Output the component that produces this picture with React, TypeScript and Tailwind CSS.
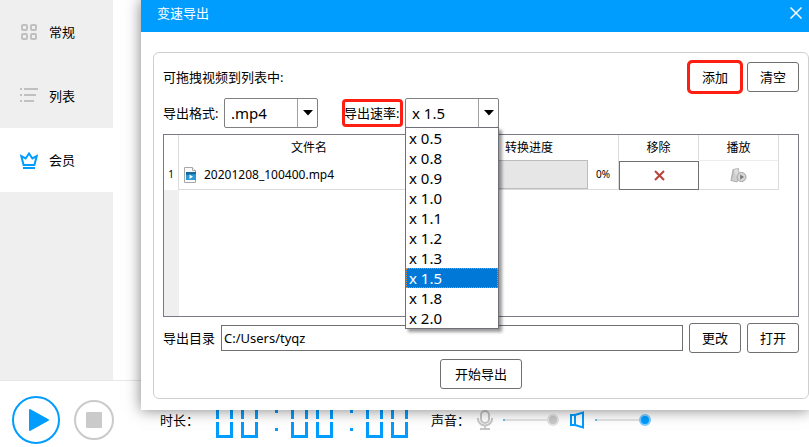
import { FC, ReactNode, useState } from 'react';

const rates = ['0.5', '0.8', '0.9', '1.0', '1.1', '1.2', '1.3', '1.5', '1.8', '2.0'];

const GridIcon: FC = () => (
  <svg width="18" height="18" viewBox="0 0 18 18" fill="none" stroke="#c0c0c0" strokeWidth="2">
    <rect x="2" y="2" width="5" height="5" rx="1" />
    <rect x="11" y="2" width="5" height="5" rx="1" />
    <rect x="2" y="11" width="5" height="5" rx="1" />
    <rect x="11" y="11" width="5" height="5" rx="1" />
  </svg>
);

const ListIcon: FC = () => (
  <svg width="18" height="18" viewBox="0 0 18 18" fill="#c0c0c0">
    <path d="M0 1h2v2H0zM4 1h14v2H4zM0 7h2v2H0zM4 7h12v2H4zM0 13h2v2H0zM4 13h10v2H4z" />
  </svg>
);

const CrownIcon: FC = () => (
  <svg width="18" height="18" viewBox="0 0 18 18" fill="none" stroke="#009dff" strokeWidth="2">
    <path d="M1.3 5.2 5.6 7.500 9 2.5l3.400 5 4.300-2.300L14.4 14H3.6z" />
    <path d="M3 17h12" />
  </svg>
);

const FileIcon: FC = () => (
  <svg width="13" height="16" viewBox="0 0 13 16">
    <path d="M.5.5h8l3 3v12H.5z" fill="#fafafa" stroke="#a8a8a8" />
    <path d="M8.5.5v3h3" fill="#fff" stroke="#a8a8a8" />
    <path d="M2 5h10v8H2z" fill="#2a9ad6" />
    <path d="M2 5h10v2l-10 1z" fill="#146a9e" />
    <path d="M5.500 7.500v4.500l3.500-2.200z" fill="#fff" />
  </svg>
);

const RemoveIcon: FC = () => (
  <svg width="11" height="11" viewBox="0 0 11 11" fill="none" stroke="#b8433a" strokeWidth="2">
    <path d="M1 1l9 9M10 1 1 10" />
  </svg>
);

const PlayFileIcon: FC = () => (
  <svg width="17" height="15" viewBox="0 0 17 15">
    <path d="M3 1.5 8.500.5 9.500 11 1 12.500z" fill="#dedede" stroke="#b5b5b5" />
    <path d="M3.500 2 2.500 8 1 12.500l6 1.500 1-2" fill="#cfcfcf" stroke="#b0b0b0" />
    <circle cx="11.5" cy="9" r="4.5" fill="#d6d6d6" stroke="#a2a2a2" />
    <path d="M10.200 6.5v5l3.800-2.500z" fill="#777" />
  </svg>
);

const MicIcon: FC = () => (
  <svg width="16" height="20" viewBox="0 0 16 20" fill="none" stroke="#c6c6c6" strokeWidth="2">
    <rect x="4" y="1" width="8" height="12" rx="4" />
    <path d="M1 8v1a7 6.5 0 0 0 14 0V8M8 15.500v3.500M3 19h10" />
  </svg>
);

const SpeakerIcon: FC = () => (
  <svg width="14" height="18" viewBox="0 0 14 18" fill="none" stroke="#009dff" strokeWidth="2">
    <path d="M1 4h4v10H1zM5 4l8-2.500v15L5 14" />
  </svg>
);

interface NavItemProps {
  icon: ReactNode;
  label: string;
  active?: boolean;
}

const NavItem: FC<NavItemProps> = ({ icon, label, active }) => (
  <a href="#" className={`flex h-16 items-center gap-[11px] pl-5 ${active ? 'bg-white' : ''}`}>
    {icon}
    {label}
  </a>
);

const SideBar: FC = () => (
  <nav className="w-[113px] shrink-0 bg-[#efefef]">
    <NavItem icon={<GridIcon />} label="常规" />
    <NavItem icon={<ListIcon />} label="列表" />
    <NavItem icon={<CrownIcon />} label="会员" active />
  </nav>
);

interface ButtonProps {
  children: ReactNode;
  className?: string;
}

const Button: FC<ButtonProps> = ({ children, className = 'w-[52px]' }) => (
  <button type="button" className={`h-[30px] shrink-0 rounded-[3px] border border-[#707070] bg-white ${className}`}>
    {children}
  </button>
);

interface SelectProps {
  id: string;
  value: string;
  options: string[];
  onChange?: (value: string) => void;
  children?: ReactNode;
}

const Select: FC<SelectProps> = ({ id, value, options, onChange, children }) => (
  <div className="relative w-[94px]">
    <select
      id={id}
      value={value}
      onChange={(e) => onChange?.(e.target.value)}
      className="block h-[30px] w-full appearance-none rounded-[2px] border border-[#808080] bg-white pl-1.5 text-[15px]"
    >
      {options.map((option) => (
        <option key={option}>{option}</option>
      ))}
    </select>
    <span className="pointer-events-none absolute inset-y-px right-px flex w-5 items-center justify-center border-l border-[#a0a0a0]">
      <svg width="10" height="6" viewBox="0 0 10 6">
        <path d="M0 0h10L5 5.500z" />
      </svg>
    </span>
    {children}
  </div>
);

const FileTable: FC = () => (
  <div className="h-[183px] border border-[#7a7a85]">
    <table className="h-full w-full table-fixed border-separate border-spacing-0 text-xs">
      <colgroup>
        <col className="w-[15px]" />
        <col />
        <col className="w-[179px]" />
        <col className="w-20" />
        <col className="w-20" />
        <col className="w-[19px]" />
      </colgroup>
      <thead>
        <tr className="h-[25px]">
          <td className="border-r border-[#dcdcdc]" />
          <th className="border-r border-[#dcdcdc] font-normal">文件名</th>
          <th className="border-r border-[#dcdcdc] font-normal">转换进度</th>
          <th className="border-r border-[#dcdcdc] font-normal">移除</th>
          <th className="border-r border-[#dcdcdc] font-normal">播放</th>
          <td />
        </tr>
      </thead>
      <tbody>
        <tr className="h-[30px]">
          <th className="border-r border-[#dcdcdc] p-0 text-[10px] font-normal">1</th>
          <td className="border-b border-[#dcdcdc] p-0">
            <div className="flex items-center gap-[7px] pl-[5px]">
              <FileIcon />
              20201208_100400.mp4
            </div>
          </td>
          <td className="border-r border-b border-[#dcdcdc] p-0">
            <div className="flex h-[29px] items-center gap-2">
              <div role="progressbar" aria-valuenow={0} className="h-full w-[148px] border border-[#bcbcbc] bg-[#e6e6e6]" />
              <span className="text-[10px]">0%</span>
            </div>
          </td>
          <td className="p-0">
            <button type="button" aria-label="移除" className="flex h-[29px] w-full items-center justify-center border border-[#707070]">
              <RemoveIcon />
            </button>
          </td>
          <td className="border-r border-b border-[#dcdcdc] p-0">
            <button type="button" aria-label="播放" className="flex h-[29px] w-full items-center justify-center border-t border-[#ececec]">
              <PlayFileIcon />
            </button>
          </td>
          <td />
        </tr>
        <tr>
          <td className="bg-[#efefef]" />
          <td colSpan={5} />
        </tr>
      </tbody>
    </table>
  </div>
);

const ExportDialog: FC = () => {
  const [rate, setRate] = useState('x 1.5');

  return (
    <section className="absolute top-0 right-0 left-[141px] bg-white shadow-[0_0_14px_rgba(0,0,0,0.5)]">
      <header className="flex h-8 items-center justify-between bg-[#009dff] pr-[7px] pb-1.5 pl-4 text-white">
        <h1>变速导出</h1>
        <button type="button" aria-label="关闭">
          <svg width="12" height="12" viewBox="0 0 12 12" stroke="#fff" strokeWidth="1.500">
            <path d="M.5.500l11 11M11.500.500l-11 11" />
          </svg>
        </button>
      </header>

      <div className="pt-5 pb-[11px] pl-3">
        <div className="flex flex-col gap-1.5 rounded-md border border-[#cfcfcf] p-[9px]">
          <div className="flex items-center gap-1.5">
            <p className="flex-1">可拖拽视频到列表中:</p>
            <Button className="w-[52px] outline-3 -outline-offset-1 outline-[#ff1f12]">添加</Button>
            <Button>清空</Button>
          </div>

          <div className="flex h-[30px] items-center whitespace-nowrap">
            <label htmlFor="format" className="mr-1.5 w-[55px]">
              导出格式:
            </label>
            <Select id="format" value=".mp4" options={['.mp4']} />
            <label
              htmlFor="rate"
              className="mr-1 ml-[26px] w-[57px] rounded-xs py-0.5 outline-3 -outline-offset-1 outline-[#ff1f12]"
            >
              导出速率:
            </label>
            <Select id="rate" value={rate} options={rates.map((r) => `x ${r}`)} onChange={setRate}>
              <ul
                role="listbox"
                aria-label="导出速率"
                className="absolute top-[29px] left-0 z-10 w-full border border-[#707078] bg-white text-[15px] leading-5 shadow-[3px_3px_3px_rgba(0,0,0,0.4)]"
              >
                {rates.map((r) => {
                  const option = `x ${r}`;
                  const selected = option === rate;
                  return (
                    <li
                      key={r}
                      role="option"
                      aria-selected={selected}
                      onClick={() => setRate(option)}
                      className={`pl-[3px] ${selected ? 'bg-[#0078d7] text-white outline-1 -outline-offset-1 outline-dotted outline-[#e08a3c]' : ''}`}
                    >
                      {option}
                    </li>
                  );
                })}
              </ul>
            </Select>
          </div>

          <FileTable />

          <div className="flex items-center gap-1.5">
            <label htmlFor="folder">导出目录</label>
            <input
              id="folder"
              defaultValue="C:/Users/tyqz"
              className="h-[26px] min-w-0 flex-1 border border-[#707070] px-0.5"
            />
            <Button>更改</Button>
            <Button>打开</Button>
          </div>

          <Button className="w-[82px] self-center">开始导出</Button>
        </div>
      </div>
    </section>
  );
};

// one LCD zero: two open boxes with a gap between them
const LcdZero: FC = () => (
  <span className="flex w-[17px] flex-col gap-[3px]">
    <span className="h-4 border-3 border-b-0 border-[#009dff]" />
    <span className="h-4 border-3 border-t-0 border-[#009dff]" />
  </span>
);

const LcdColon: FC = () => (
  <span className="mr-[5px] ml-[9px] flex flex-col gap-[15px]">
    <span className="size-[3px] bg-[#009dff]" />
    <span className="size-[3px] bg-[#009dff]" />
  </span>
);

const Clock: FC = () => (
  <div role="timer" aria-label="00:00:00" className="flex items-center gap-2">
    <LcdZero />
    <LcdZero />
    <LcdColon />
    <LcdZero />
    <LcdZero />
    <LcdColon />
    <LcdZero />
    <LcdZero />
  </div>
);

interface VolumeProps {
  label: string;
  className: string;
}

const Volume: FC<VolumeProps> = ({ label, className }) => (
  <input
    type="range"
    aria-label={label}
    defaultValue={100}
    className={`h-3 w-14 appearance-none [&::-webkit-slider-runnable-track]:h-0.5 [&::-webkit-slider-runnable-track]:bg-[linear-gradient(90deg,#6fb8ea_2px,#e4e4e4_2px)] [&::-webkit-slider-thumb]:-mt-[5px] [&::-webkit-slider-thumb]:size-3 [&::-webkit-slider-thumb]:appearance-none [&::-webkit-slider-thumb]:rounded-full [&::-webkit-slider-thumb]:border-2 ${className}`}
  />
);

const Player: FC = () => (
  <footer className="flex h-[67px] items-center border-t border-[#e8e8e8] pt-3 pl-3">
    <button type="button" aria-label="播放">
      <svg width="48" height="48" viewBox="0 0 48 48">
        <circle cx="24" cy="24" r="23" fill="none" stroke="#009dff" strokeWidth="2" />
        <path d="M18 14v20l18-10z" fill="#009dff" stroke="#009dff" strokeWidth="2" strokeLinejoin="round" />
      </svg>
    </button>
    <button type="button" aria-label="停止" className="ml-3.5">
      <svg width="40" height="40" viewBox="0 0 40 40">
        <circle cx="20" cy="20" r="19" fill="none" stroke="#cacaca" strokeWidth="2" />
        <rect x="12" y="12" width="16" height="16" rx="1" fill="#cacaca" />
      </svg>
    </button>
    <span className="ml-[46px] w-14">时长：</span>
    <Clock />
    <span className="ml-[23px] w-[46px] whitespace-nowrap">声音：</span>
    <MicIcon />
    <span className="ml-2.5 flex items-center gap-[11px]">
      <Volume
        label="麦克风"
        className="[&::-webkit-slider-thumb]:border-[#e2e2e2] [&::-webkit-slider-thumb]:bg-[#c8c8c8]"
      />
      <SpeakerIcon />
      <Volume
        label="声音"
        className="[&::-webkit-slider-thumb]:border-[#7fcbff] [&::-webkit-slider-thumb]:bg-[#009dff]"
      />
    </span>
  </footer>
);

const App: FC = () => {
  return (
    <div className="relative flex min-h-screen flex-col overflow-hidden bg-white font-['Noto_Sans','Noto_Sans_CJK_SC',sans-serif] text-[13px] leading-5 text-black">
      <main className="flex flex-1">
        <SideBar />
        <ExportDialog />
      </main>
      <Player />
    </div>
  );
};

export default App;
